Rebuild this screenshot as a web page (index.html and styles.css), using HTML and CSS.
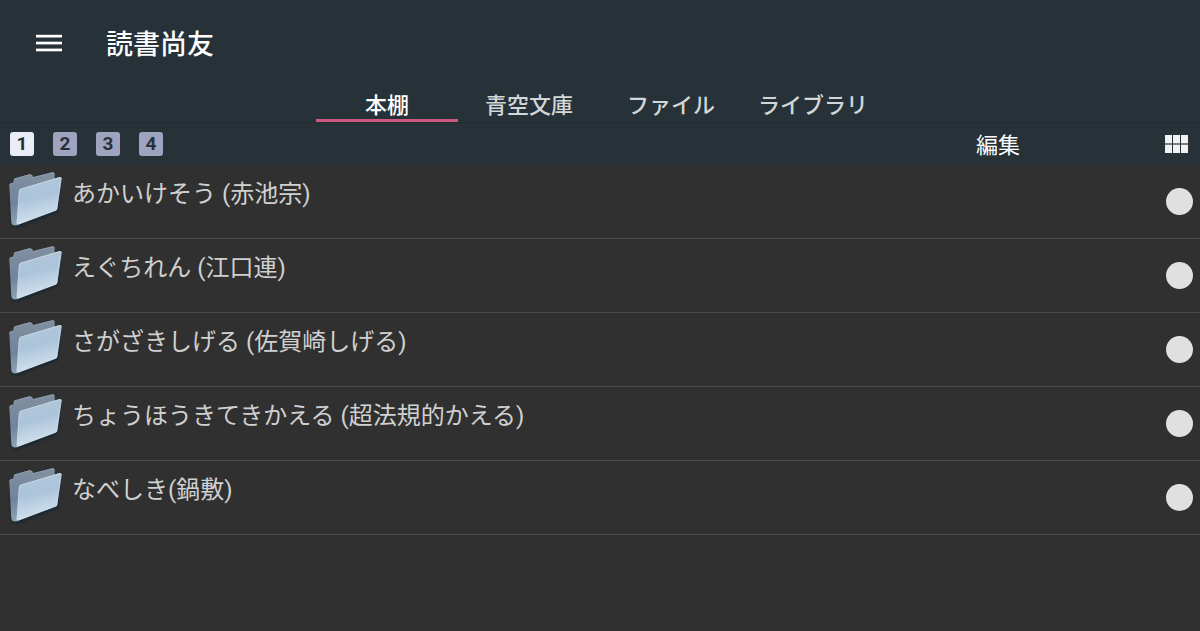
FILE: index.html
```html
<!DOCTYPE html>
<html lang="ja">

<head>
    <meta charset="UTF-8">
    <meta name="viewport" content="width=device-width, initial-scale=1.0">
    <title>読書尚友</title>
    <link rel="stylesheet" href="styles.css">
</head>

<body>
    <!-- folder icon, shared by every row -->
    <svg class="defs" width="0" height="0" aria-hidden="true">
        <defs>
            <linearGradient id="backFill" x1="0" y1="0" x2="0" y2="1">
                <stop offset="0" stop-color="#8290a0"/>
                <stop offset="0.6" stop-color="#71849a"/>
                <stop offset="1" stop-color="#8ca3b9"/>
            </linearGradient>
            <linearGradient id="frontFill" x1="0" y1="0" x2="0.25" y2="1">
                <stop offset="0" stop-color="#b4c6d8"/>
                <stop offset="0.5" stop-color="#abc4db"/>
                <stop offset="1" stop-color="#d3e2ee"/>
            </linearGradient>
            <filter id="soft" x="-20%" y="-20%" width="140%" height="140%">
                <feGaussianBlur stdDeviation="4"/>
            </filter>
        </defs>
        <symbol id="folder" viewBox="0 0 192 216">
            <path d="M32 80 L38 182 L52 186 L172 140 L180 60 Z" fill="#10202f" filter="url(#soft)"/>
            <path d="M28 64 Q28 54 35 54 L41 54 L42 43 Q43 40 47 39 L88 28 Q93 27 97 31 L98 37 L157 22 Q164 21 164 28 L164 60 L60 150 L52 181 Q36 184 34 172 Z" fill="url(#backFill)"/>
            <path d="M29 62 Q30 55 35 55 L41 54 L43 42 L90 29 L97 33 L98 38 L158 23 L163 25" fill="none" stroke="#94a2b0" stroke-width="2"/>
            <path d="M62 71 L178 36 Q186 35 185 42 L172 131 Q171 135 167 137 L55 179 Q50 180 50 175 L57 78 Q58 73 62 71 Z" fill="url(#frontFill)"/>
            <path d="M51 174 L58 78 Q58 73 63 72 L179 38 Q184 37 183 43" fill="none" stroke="#cfdde8" stroke-width="2"/>
            <path d="M180 52 L170 131 Q170 134 166 135 L54 177" fill="none" stroke="#c8d8e5" stroke-width="2"/>
        </symbol>
    </svg>

    <header class="header">
        <div class="title-bar">
            <button class="menu" type="button" aria-label="メニュー">
                <svg width="26" height="18" viewBox="0 0 26 18" fill="#fff">
                    <rect y="0.8" width="26" height="2.7"/>
                    <rect y="7.7" width="26" height="2.7"/>
                    <rect y="14.6" width="26" height="2.7"/>
                </svg>
            </button>
            <h1 class="title">読書尚友</h1>
        </div>
        <nav class="tabs">
            <a class="tab active" href="#">本棚</a>
            <a class="tab" href="#">青空文庫</a>
            <a class="tab" href="#">ファイル</a>
            <a class="tab" href="#">ライブラリ</a>
        </nav>
        <div class="toolbar">
            <div class="shelves">
                <button class="shelf selected" type="button">1</button>
                <button class="shelf" type="button">2</button>
                <button class="shelf" type="button">3</button>
                <button class="shelf" type="button">4</button>
            </div>
            <button class="edit" type="button">編集</button>
            <button class="grid" type="button" aria-label="グリッド表示">
                <svg width="23" height="18" viewBox="0 0 23 18" fill="#f2f2f2">
                    <rect width="7" height="8.4"/>
                    <rect x="8" width="7" height="8.4"/>
                    <rect x="16" width="7" height="8.4"/>
                    <rect y="9.6" width="7" height="8.4"/>
                    <rect x="8" y="9.6" width="7" height="8.4"/>
                    <rect x="16" y="9.6" width="7" height="8.4"/>
                </svg>
            </button>
        </div>
    </header>

    <ul class="list">
        <li class="row">
            <svg class="folder" aria-hidden="true"><use href="#folder"/></svg>
            <span class="name">あかいけそう (赤池宗)</span>
            <button class="dot" type="button" aria-label="あかいけそう"></button>
        </li>
        <li class="row">
            <svg class="folder" aria-hidden="true"><use href="#folder"/></svg>
            <span class="name">えぐちれん (江口連)</span>
            <button class="dot" type="button" aria-label="えぐちれん"></button>
        </li>
        <li class="row">
            <svg class="folder" aria-hidden="true"><use href="#folder"/></svg>
            <span class="name">さがざきしげる (佐賀崎しげる)</span>
            <button class="dot" type="button" aria-label="さがざきしげる"></button>
        </li>
        <li class="row">
            <svg class="folder" aria-hidden="true"><use href="#folder"/></svg>
            <span class="name">ちょうほうきてきかえる (超法規的かえる)</span>
            <button class="dot" type="button" aria-label="ちょうほうきてきかえる"></button>
        </li>
        <li class="row">
            <svg class="folder" aria-hidden="true"><use href="#folder"/></svg>
            <span class="name">なべしき(鍋敷)</span>
            <button class="dot" type="button" aria-label="なべしき"></button>
        </li>
    </ul>
</body>

</html>
```
FILE: styles.css
```css
* {
    box-sizing: border-box;
}
body {
    margin: 0;
    background-color: #303030;
    color: #d0d0d0;
    font-family: Roboto, "Noto Sans CJK JP", sans-serif;
}
button {
    margin: 0;
    padding: 0;
    border: 0;
    background: none;
    color: inherit;
    font-family: inherit;
    cursor: pointer;
}
svg {
    display: block;
}
.defs {
    position: absolute;
}

/* header */
.header {
    background-color: #263238;
}
.title-bar {
    display: flex;
    align-items: center;
    gap: 44px;
    height: 86px;
    padding: 0 36px;
}
.title {
    margin: 0;
    padding-top: 4px;
    color: #fff;
    font-size: 27px;
    font-weight: 500;
    line-height: 40px;
}
.tabs {
    display: flex;
    justify-content: center;
}
.tab {
    width: 142px;
    height: 36px;
    border-bottom: 3px solid transparent;
    color: #d3d6d7;
    font-size: 22px;
    font-weight: 500;
    line-height: 40px;
    text-align: center;
    text-decoration: none;
    white-space: nowrap;
}
.tab.active {
    border-bottom-color: #cf5880;
    color: #fff;
}

/* shelf numbers and tools */
.toolbar {
    display: flex;
    align-items: center;
    height: 43px;
    padding: 0 12px 0 10px;
    border-top: 1px solid #212c31;
}
.shelves {
    display: flex;
    gap: 19px;
    margin-right: auto;
}
.shelf {
    width: 24px;
    height: 24px;
    border-radius: 3px;
    background-color: #9fa3bf;
    color: #263238;
    font-size: 19px;
    font-weight: 700;
    line-height: 24px;
}
.shelf.selected {
    background-color: #ececf8;
}
.edit {
    margin-right: 145px;
    padding-top: 4px;
    color: #fff;
    font-size: 22px;
    line-height: 36px;
}

/* folder list */
.list {
    margin: 0;
    padding: 0;
    list-style: none;
}
.row {
    display: flex;
    align-items: center;
    height: 74px;
    padding-right: 7px;
    border-bottom: 1px solid #4b4b4b;
}
.folder {
    flex: none;
    align-self: flex-start;
    width: 64px;
    height: 72px;
}
.name {
    flex: 1;
    align-self: flex-start;
    padding: 9px 8px;
    font-size: 24px;
    line-height: 40px;
}
.dot {
    width: 27px;
    height: 27px;
    border-radius: 50%;
    background-color: #e0e0e0;
}
```
